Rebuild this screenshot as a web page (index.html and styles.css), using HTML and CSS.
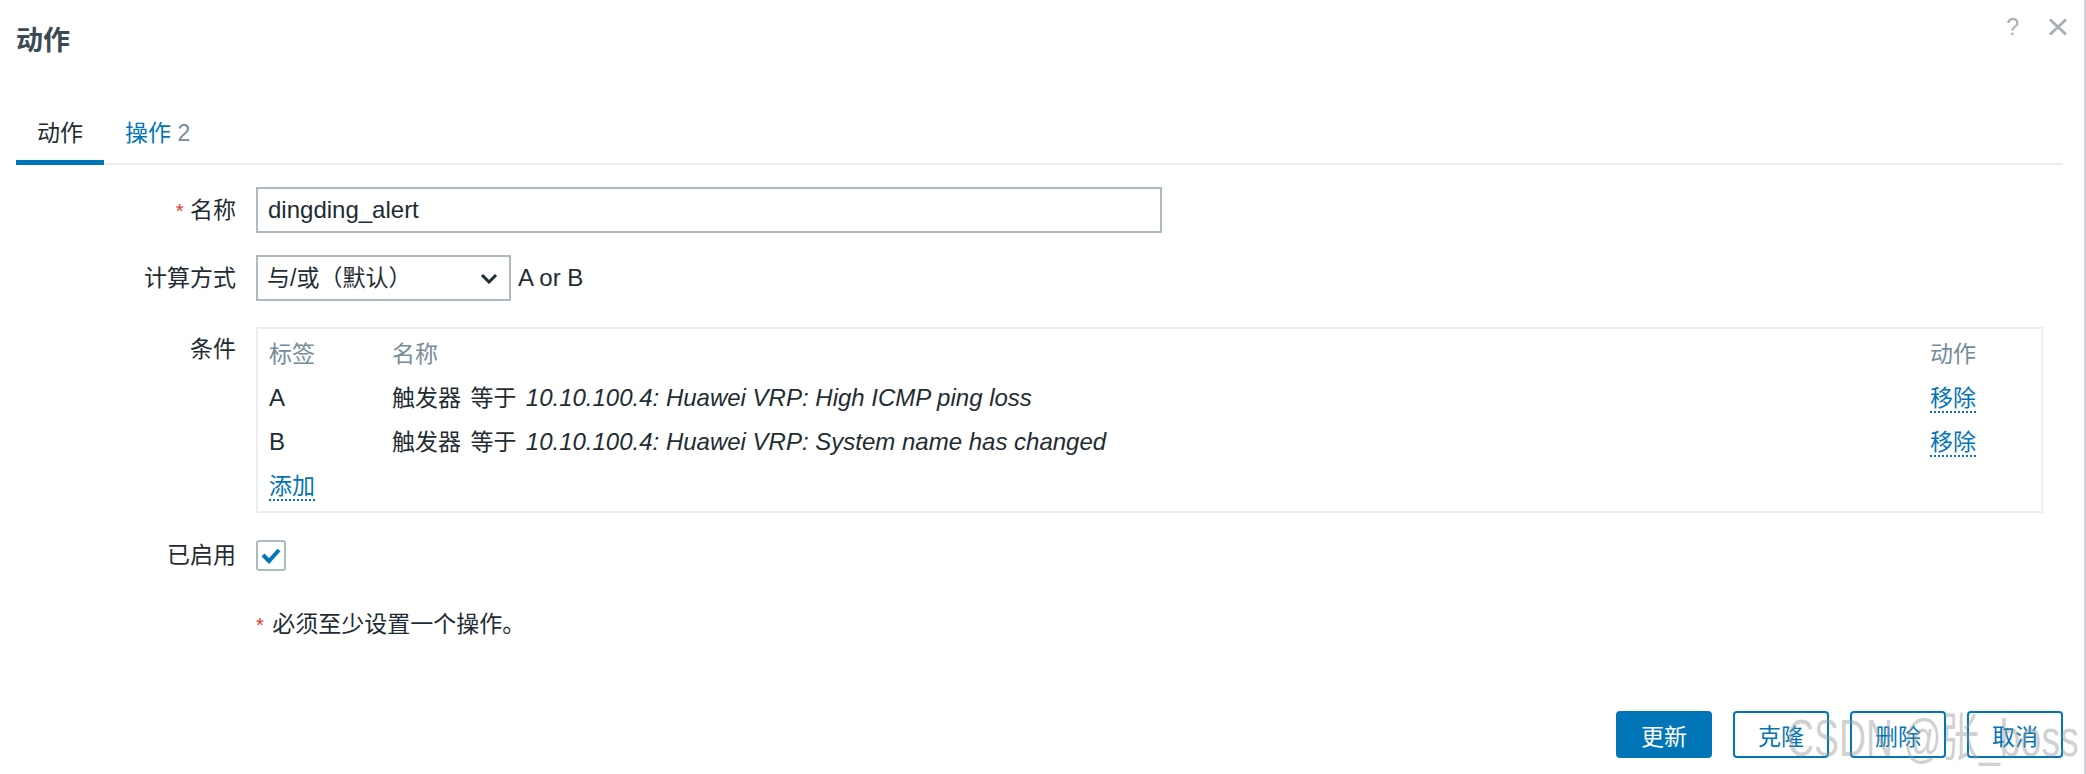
FILE: index.html
```html
<!DOCTYPE html>
<html lang="zh-CN">
<head>
<meta charset="utf-8">
<title>动作</title>
<link rel="stylesheet" href="styles.css">
</head>
<body>
<div class="dialog">
  <header class="dlg-head">
    <h1 class="dlg-title">动作</h1>
    <div class="dlg-tools">
      <span class="tool-help">?</span>
      <svg class="tool-close" viewBox="0 0 20 18" aria-hidden="true"><path d="M2 1.5 L18 16.5 M18 1.5 L2 16.5"/></svg>
    </div>
  </header>

  <nav class="tabs">
    <a class="tab active">动作</a>
    <a class="tab">操作 <span class="tab-count">2</span></a>
  </nav>

  <form class="form">
    <div class="row row-name">
      <label class="lbl"><span class="req">*</span> 名称</label>
      <div class="field"><input class="text-input" type="text" value="dingding_alert"></div>
    </div>

    <div class="row row-calc">
      <label class="lbl">计算方式</label>
      <div class="field field-inline">
        <div class="select">
          <span class="select-text">与/或（默认）</span>
          <svg class="chevron" viewBox="0 0 18 11" aria-hidden="true"><path d="M2 2 L9 9 L16 2"/></svg>
        </div>
        <span class="latin calc-expr">A or B</span>
      </div>
    </div>

    <div class="row row-cond">
      <label class="lbl lbl-top">条件</label>
      <div class="field">
        <div class="cond-box">
          <div class="cond-row cond-head">
            <span>标签</span><span>名称</span><span>动作</span>
          </div>
          <div class="cond-row">
            <span class="latin">A</span>
            <span class="cond-text">触发器 等于 <em class="latin">10.10.100.4: Huawei VRP: High ICMP ping loss</em></span>
            <span><a class="link">移除</a></span>
          </div>
          <div class="cond-row">
            <span class="latin">B</span>
            <span class="cond-text">触发器 等于 <em class="latin">10.10.100.4: Huawei VRP: System name has changed</em></span>
            <span><a class="link">移除</a></span>
          </div>
          <div class="cond-row">
            <span><a class="link">添加</a></span>
          </div>
        </div>
      </div>
    </div>

    <div class="row row-enabled">
      <label class="lbl">已启用</label>
      <div class="field">
        <span class="checkbox">
          <svg viewBox="0 0 26 27" aria-hidden="true"><path d="M5 13 L11 19 L21 8"/></svg>
        </span>
      </div>
    </div>

    <div class="row row-note">
      <span class="lbl"></span>
      <div class="field note"><span class="req">*</span> 必须至少设置一个操作。</div>
    </div>
  </form>

  <footer class="actions">
    <button class="btn btn-primary" type="button">更新</button>
    <button class="btn btn-alt" type="button">克隆</button>
    <button class="btn btn-alt" type="button">删除</button>
    <button class="btn btn-alt" type="button">取消</button>
  </footer>

  <div class="watermark">CSDN @张_boss</div>
</div>
</body>
</html>
```

FILE: styles.css
```css
* { box-sizing: border-box; }

html, body {
  margin: 0;
  padding: 0;
  background: #ffffff;
}

body {
  font-family: "Liberation Sans", "Noto Sans CJK SC", sans-serif;
  font-size: 23px;
  line-height: 32px;
  color: #1f2c33;
}

.dialog {
  position: relative;
  width: 2086px;
  height: 774px;
  padding: 0 21px 0 16px;
  border-right: 2px solid #cdd5da;
  overflow: hidden;
}

/* header */
.dlg-head {
  display: flex;
  height: 82px;
  align-items: center;
}

.dlg-title {
  margin: 0;
  font-size: 27px;
  font-weight: bold;
  line-height: 32px;
  color: #3b4a54;
}

.dlg-tools {
  margin-left: auto;
  margin-right: -5px;
  margin-top: 14px;
  align-self: flex-start;
  display: flex;
  align-items: center;
  gap: 29px;
  color: #a6b0b6;
}

.tool-help {
  font-size: 23px;
  line-height: 26px;
}

.tool-close {
  width: 20px;
  height: 18px;
  fill: none;
  stroke: #a6b0b6;
  stroke-width: 3;
}

/* tabs */
.tabs {
  display: flex;
  margin-top: 19px;
  border-bottom: 2px solid #ebeef0;
}

.tab {
  padding: 16px 21px 11px;
  border-bottom: 5px solid transparent;
  margin-bottom: -2px;
  color: #0275b8;
  text-decoration: none;
  line-height: 32px;
}

.tab.active {
  color: #1f2c33;
  border-bottom-color: #0275b8;
}

.tab-count { color: #768d99; }

/* form */
.form { margin-top: 22px; }

.row {
  display: grid;
  grid-template-columns: 220px 1fr;
  column-gap: 20px;
  align-items: center;
}

.row-calc { margin-top: 22px; }
.row-cond { margin-top: 26px; align-items: start; }
.row-enabled { margin-top: 26px; }
.row-note { margin-top: 37px; }

.lbl {
  text-align: right;
  white-space: nowrap;
}

.lbl-top { padding-top: 6px; }

.req {
  color: #e33734;
  font-family: "Liberation Sans", sans-serif;
  font-size: 20px;
}

.latin {
  font-family: "Liberation Sans", sans-serif;
  font-size: 24px;
}

.text-input {
  display: block;
  width: 906px;
  height: 46px;
  border: 2px solid #acbbc2;
  border-radius: 0;
  padding: 0 10px;
  font-family: "Liberation Sans", sans-serif;
  font-size: 24px;
  color: #1f2c33;
  background: #fff;
  outline: none;
}

.field-inline {
  display: flex;
  align-items: center;
}

.select {
  display: flex;
  align-items: center;
  width: 255px;
  height: 46px;
  border: 2px solid #acbbc2;
  padding: 0 11px 0 9px;
}

.select-text { flex: 1; }

.chevron {
  width: 18px;
  height: 11px;
  fill: none;
  stroke: #1f2c33;
  stroke-width: 3;
}

.calc-expr { margin-left: 7px; }

/* conditions */
.cond-box {
  margin-right: 20px;
  border: 2px solid #ebeef0;
  padding: 3px 0 3px 11px;
}

.cond-row {
  display: grid;
  grid-template-columns: 123px 1fr 111px;
  height: 44px;
  align-items: center;
}

.cond-head { color: #768d99; }

.cond-text { word-spacing: 3px; }

.cond-row em {
  font-style: italic;
  word-spacing: 0;
}

.link {
  color: #0275b8;
  text-decoration: none;
  border-bottom: 2px dotted #0275b8;
}

/* checkbox */
.checkbox {
  display: block;
  width: 30px;
  height: 31px;
  border: 2px solid #acbbc2;
  border-radius: 3px;
}

.checkbox svg {
  display: block;
  width: 26px;
  height: 27px;
  fill: none;
  stroke: #0275b8;
  stroke-width: 4;
}

.note .req { margin-right: 2px; }

/* footer */
.actions {
  margin-top: 70px;
  display: flex;
  justify-content: flex-end;
  gap: 21px;
}

.btn {
  width: 96px;
  height: 47px;
  border-radius: 4px;
  font-family: "Liberation Sans", "Noto Sans CJK SC", sans-serif;
  font-size: 23px;
  padding: 0;
  cursor: pointer;
}

.btn-primary {
  background: #0275b8;
  border: 2px solid #0275b8;
  color: #ffffff;
}

.btn-alt {
  background: #ffffff;
  border: 2px solid #0275b8;
  color: #0275b8;
}

/* watermark overlay */
.watermark {
  position: absolute;
  left: 1787px;
  top: 708px;
  font-family: "Liberation Sans", "Noto Sans CJK SC", sans-serif;
  font-size: 52px;
  line-height: 60px;
  color: rgba(150, 150, 150, 0.45);
  transform: scaleX(0.72);
  transform-origin: left top;
  white-space: nowrap;
  pointer-events: none;
}
```
